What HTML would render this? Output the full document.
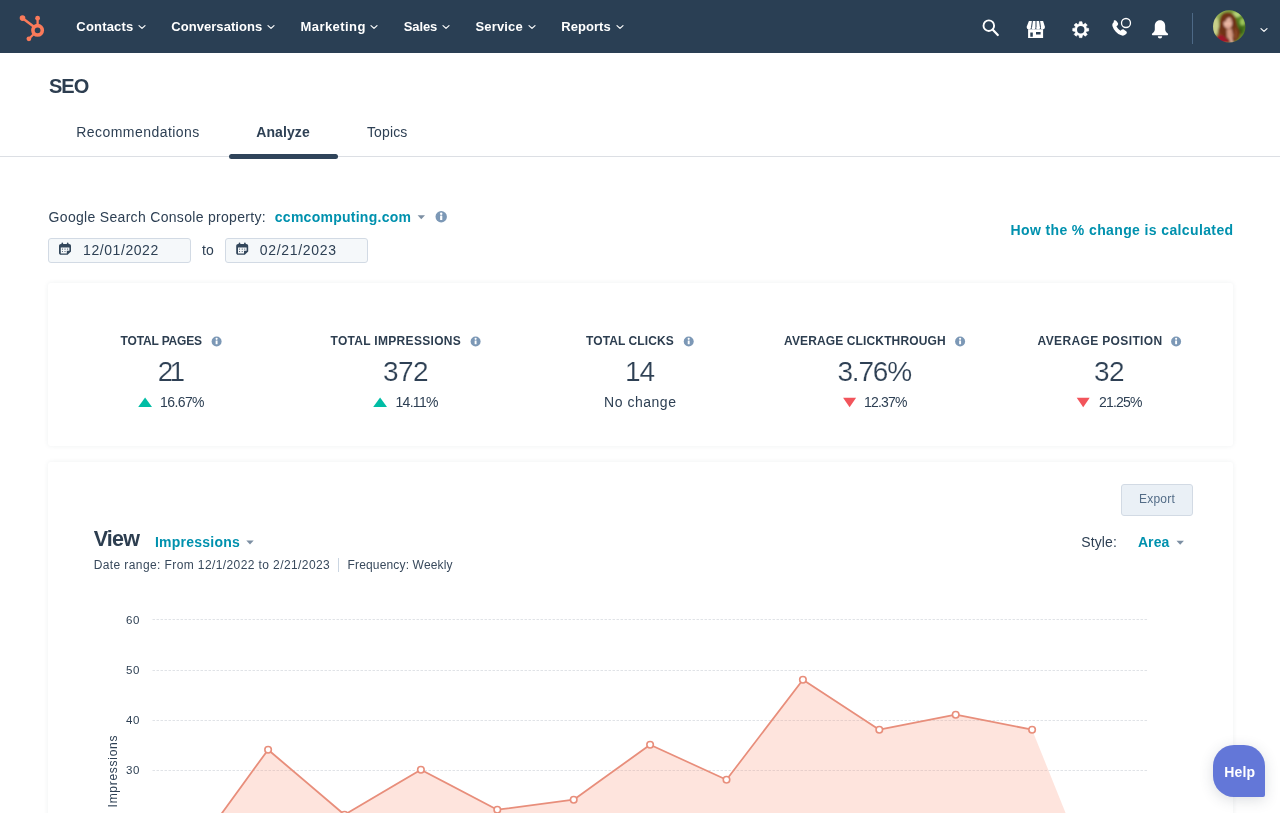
<!DOCTYPE html>
<html lang="en">
<head>
<meta charset="utf-8">
<title>SEO | Analyze</title>
<style>
*{box-sizing:border-box}
html,body{margin:0;padding:0}
body{width:1280px;height:813px;overflow:hidden;position:relative;background:#fff;color:#2e4054;font-family:"Liberation Sans",sans-serif;font-size:14px}
h1,h2,h3,p,ul,li,dl,dt,dd{margin:0;padding:0;font-weight:normal;list-style:none}
a{text-decoration:none;color:inherit}
.t{position:absolute;white-space:pre;margin:0;padding:0;display:block}
.abs{position:absolute}
svg{position:absolute;overflow:visible}
nav{position:absolute;left:0;top:0;width:1280px;height:53px;background:#2a3f54}
header,main{position:absolute;left:0;top:0;width:1280px}
nav,header,main,.help{will-change:transform}
.rule{position:absolute;left:0;top:156px;width:1280px;height:1px;background:#dcdfe4}
.tabline{position:absolute;left:228.5px;top:154px;width:109.5px;height:5px;border-radius:3px;background:#2f445a}
.card{position:absolute;left:48px;width:1185px;background:#fff;border-radius:3px;box-shadow:0 0 5px rgba(45,62,80,.075)}
.inp{position:absolute;top:238px;width:143px;height:25px;background:#f5f8fa;border:1px solid #d2dae4;border-radius:3px}
.btn{position:absolute;left:1121px;top:483.5px;width:72px;height:32px;background:#eaf0f6;border:1px solid #d2dae4;border-radius:3px}
.sep{position:absolute;left:338px;top:557.5px;width:1px;height:14.5px;background:#cbd6e2}
.big{-webkit-text-stroke:0.2px #fff}
.help{position:absolute;left:1213px;top:745px;width:52.3px;height:51.8px;background:#6377d8;border-radius:21px 21px 2px 21px;box-shadow:0 3px 14px rgba(45,62,80,.17)}
</style>
</head>
<body>

<nav>
<svg style="left:14px;top:10px" width="40" height="36" viewBox="14 10 40 36" role="img" aria-label="HubSpot">
<g fill="none" stroke="#fa7a5a" stroke-linecap="round">
<circle cx="37.6" cy="30.3" r="4.7" stroke-width="3.6"/>
<line x1="22.6" y1="18.3" x2="33.6" y2="26.6" stroke-width="2.5"/>
<line x1="37.6" y1="18.6" x2="37.6" y2="24.5" stroke-width="2.3"/>
<line x1="29.2" y1="38.5" x2="33.6" y2="34.2" stroke-width="2.2"/>
</g>
<g fill="#fa7a5a"><circle cx="22.5" cy="18.1" r="2.8"/><circle cx="37.6" cy="18.2" r="2.4"/><circle cx="28.9" cy="38.8" r="2.4"/></g>
</svg>
<ul>
<li><a class="t" style="left:76.3px;top:18.7px;font-size:13px;line-height:16px;font-weight:700;color:#fff;letter-spacing:0.19px;">Contacts</a><svg style="left:137.4px;top:22.3px" width="10" height="10" viewBox="0 0 10 10"><path d="M2 3.6 L5 6.4 L8 3.6" fill="none" stroke="#fff" stroke-width="1.2" stroke-linecap="round" stroke-linejoin="round"/></svg></li>
<li><a class="t" style="left:171.2px;top:18.7px;font-size:13px;line-height:16px;font-weight:700;color:#fff;letter-spacing:0.06px;">Conversations</a><svg style="left:266.15px;top:22.3px" width="10" height="10" viewBox="0 0 10 10"><path d="M2 3.6 L5 6.4 L8 3.6" fill="none" stroke="#fff" stroke-width="1.2" stroke-linecap="round" stroke-linejoin="round"/></svg></li>
<li><a class="t" style="left:300.5px;top:18.7px;font-size:13px;line-height:16px;font-weight:700;color:#fff;letter-spacing:0.44px;">Marketing</a><svg style="left:369.4px;top:22.3px" width="10" height="10" viewBox="0 0 10 10"><path d="M2 3.6 L5 6.4 L8 3.6" fill="none" stroke="#fff" stroke-width="1.2" stroke-linecap="round" stroke-linejoin="round"/></svg></li>
<li><a class="t" style="left:403.8px;top:18.7px;font-size:13px;line-height:16px;font-weight:700;color:#fff;letter-spacing:-0.14px;">Sales</a><svg style="left:441.25px;top:22.3px" width="10" height="10" viewBox="0 0 10 10"><path d="M2 3.6 L5 6.4 L8 3.6" fill="none" stroke="#fff" stroke-width="1.2" stroke-linecap="round" stroke-linejoin="round"/></svg></li>
<li><a class="t" style="left:475.5px;top:18.7px;font-size:13px;line-height:16px;font-weight:700;color:#fff;letter-spacing:0.16px;">Service</a><svg style="left:526.8px;top:22.3px" width="10" height="10" viewBox="0 0 10 10"><path d="M2 3.6 L5 6.4 L8 3.6" fill="none" stroke="#fff" stroke-width="1.2" stroke-linecap="round" stroke-linejoin="round"/></svg></li>
<li><a class="t" style="left:561.2px;top:18.7px;font-size:13px;line-height:16px;font-weight:700;color:#fff;letter-spacing:0.07px;">Reports</a><svg style="left:614.65px;top:22.3px" width="10" height="10" viewBox="0 0 10 10"><path d="M2 3.6 L5 6.4 L8 3.6" fill="none" stroke="#fff" stroke-width="1.2" stroke-linecap="round" stroke-linejoin="round"/></svg></li>
</ul>
<svg style="left:980px;top:17px" width="22" height="22" viewBox="980 17 22 22" role="img" aria-label="Search"><circle cx="988.8" cy="25.7" r="5.3" fill="none" stroke="#fff" stroke-width="1.9"/><line x1="992.8" y1="29.8" x2="997.8" y2="35" stroke="#fff" stroke-width="2.2" stroke-linecap="round"/></svg>
<svg style="left:1026px;top:20px" width="20" height="19" viewBox="1026 20 20 19" role="img" aria-label="Marketplace">
<path fill="#fff" d="M1028.9 21.1h14.2l1.9 5.9a2.3 2.4 0 0 1-4.6 0a2.3 2.4 0 0 1-4.6 0a2.3 2.4 0 0 1-4.6 0a2.3 2.4 0 0 1-4.6 0z"/>
<path fill="#fff" fill-rule="evenodd" d="M1028.1 29.2h15v8.8h-15z M1030.3 32.4v4.4h2.5v-4.4z M1036 32.1v2.3h4.6v-2.3z"/>
<g stroke="#2a3f54" stroke-width="1"><line x1="1032.4" y1="21" x2="1031.5" y2="27.6"/><line x1="1036" y1="21" x2="1036" y2="27.6"/><line x1="1039.6" y1="21" x2="1040.5" y2="27.6"/></g>
</svg>
<svg style="left:1070px;top:19px" width="22" height="22" viewBox="1070 19 22 22" role="img" aria-label="Settings"><path fill="#fff" stroke="#fff" stroke-width="0.7" stroke-linejoin="round" d="M1079.13 24.01 L1079.43 21.8 L1081.97 21.8 L1082.27 24.01 L1083.61 24.57 L1085.38 23.21 L1087.19 25.02 L1085.83 26.79 L1086.39 28.13 L1088.6 28.43 L1088.6 30.97 L1086.39 31.27 L1085.83 32.61 L1087.19 34.38 L1085.38 36.19 L1083.61 34.83 L1082.27 35.39 L1081.97 37.6 L1079.43 37.6 L1079.13 35.39 L1077.79 34.83 L1076.02 36.19 L1074.21 34.38 L1075.57 32.61 L1075.01 31.27 L1072.8 30.97 L1072.8 28.43 L1075.01 28.13 L1075.57 26.79 L1074.21 25.02 L1076.02 23.21 L1077.79 24.57Z"/><circle cx="1080.7" cy="29.7" r="3.7" fill="#2a3f54"/></svg>
<svg style="left:1110px;top:16px" width="24" height="22" viewBox="1110 16 24 22" role="img" aria-label="Calling">
<path fill="#fff" transform="translate(1119.6 28) scale(0.96 0.92) translate(-1120.6 -28.4)" d="M1114.6 20.3c.9-.6 2.1-.4 2.7 .5l1.5 2.3c.5 .8 .3 1.9-.4 2.5l-1.1 .9c.9 2 2.4 3.7 4.3 4.9l1-1c.7-.7 1.8-.8 2.6-.2l2.2 1.7c.9 .7 1 2 .2 2.8l-.9 .9c-1.1 1.1-2.8 1.4-4.3 .8c-4.4-1.8-7.8-5.5-9.2-10c-.5-1.6 0-3.3 1.3-4.3z"/>
<circle cx="1126" cy="23" r="4.5" fill="#2a3f54" stroke="#fff" stroke-width="1.3"/></svg>
<svg style="left:1150px;top:18px" width="20" height="22" viewBox="1150 18 20 22" role="img" aria-label="Notifications">
<path fill="#fff" d="M1160 20.2c-3.3 0-5.2 2.5-5.2 5.6v3.7c0 1.5-.9 2.9-2.3 3.7c-.4 .2-.6 .6-.6 1c0 .6 .5 1.1 1.1 1.1h14c.6 0 1.1-.5 1.1-1.1c0-.4-.2-.8-.6-1c-1.4-.8-2.3-2.2-2.3-3.7v-3.7c0-3.1-1.9-5.6-5.2-5.6z"/>
<path fill="#fff" d="M1157.8 36.3h4.4a2.2 2.2 0 0 1-4.4 0z"/></svg>
<span class="abs" style="left:1192px;top:13px;width:1px;height:31px;background:#4d6986"></span>
<svg style="left:1213px;top:9.7px" width="33" height="33" viewBox="0 0 33 33" role="img" aria-label="Account avatar">
<defs><clipPath id="av"><circle cx="16.2" cy="16.4" r="16.2"/></clipPath>
<filter id="avb" x="-20%" y="-20%" width="140%" height="140%"><feGaussianBlur stdDeviation="1"/></filter>
<radialGradient id="avg" cx="0.8" cy="0.5" r="0.8"><stop offset="0" stop-color="#3f6a16"/><stop offset="0.45" stop-color="#6b962f"/><stop offset="1" stop-color="#a8bb63"/></radialGradient></defs>
<g clip-path="url(#av)"><g filter="url(#avb)">
<rect x="-3" y="-3" width="39" height="39" fill="url(#avg)"/>
<ellipse cx="2.5" cy="16" rx="3.5" ry="9" fill="#c9d08a"/>
<ellipse cx="23" cy="4.5" rx="5" ry="2.6" fill="#b5d478"/>
<ellipse cx="29.5" cy="12" rx="2.5" ry="3.5" fill="#9cc65a"/>
<ellipse cx="27" cy="21" rx="2.5" ry="3" fill="#2f5a12"/>
<path d="M9 4.5c3-3 9-3 12 .5c2 2.5 2.5 6 3 9c.5 3 2.5 5.5 3 8.5c.5 3-1 6-3 8l-6 2.5l-11-2.5c-2-3-2.5-6-2-9c.5-3 1.5-5 1.5-8c0-3.5 .5-6.5 2.5-9z" fill="#6f3219"/>
<path d="M6 20c1 4 3 6 6 7l-3 4l-4-3z" fill="#8c4a28"/>
<path d="M22 17c2 3 3 7 2 11l-3 2z" fill="#8c4a28"/>
<path d="M13.5 19.5l5-1l1.5 6.5l-1 5.5l-5-3z" fill="#d49a84"/>
<ellipse cx="14.7" cy="12.4" rx="4.3" ry="6.3" transform="rotate(-10 14.7 12.4)" fill="#edb9a6"/>
<ellipse cx="13.2" cy="11.5" rx="0.7" ry="0.5" fill="#5a3325"/><ellipse cx="16.6" cy="11" rx="0.7" ry="0.5" fill="#5a3325"/>
<path d="M13.6 15.8q1.6 1 3.2 -.3" stroke="#b0604f" stroke-width="0.6" fill="none"/>
<path d="M10 9.5c1-3.5 5.5-5 8.5-3c-2 .5-4 1.5-5 3c-1 1.5-2 2.5-3.5 3z" fill="#6f3219"/>
<path d="M3 26.5c2.5-2 5.5-2 7.5-.5l7 7h-15z" fill="#a1122b"/>
<path d="M16 28l2.5-1l2 6h-3z" fill="#e0b09c"/>
</g></g></svg>
<svg style="left:1259px;top:24.7px" width="10" height="10" viewBox="0 0 10 10"><path d="M2 3.6 L5 6.4 L8 3.6" fill="none" stroke="#fff" stroke-width="1.2" stroke-linecap="round" stroke-linejoin="round"/></svg>
</nav>
<header>
<h1 class="t" style="left:48.9px;top:73.67px;font-size:20px;line-height:25px;font-weight:700;color:#2d3e50;letter-spacing:-0.89px;">SEO</h1>
<div class="rule"></div>
<ul>
<li><a class="t" style="left:76.2px;top:122.75px;font-size:14px;line-height:18px;letter-spacing:0.46px;">Recommendations</a></li>
<li><a class="t" style="left:256.2px;top:122.75px;font-size:14px;line-height:18px;font-weight:700;letter-spacing:0.11px;">Analyze</a></li>
<li><a class="t" style="left:367px;top:122.75px;font-size:14px;line-height:18px;letter-spacing:0.12px;">Topics</a></li>
</ul>
<div class="tabline"></div>
</header>
<main>
<label class="t" style="left:48.6px;top:208.35px;font-size:14px;line-height:18px;letter-spacing:0.31px;">Google Search Console property:</label>
<a class="t" style="left:274.8px;top:208.35px;font-size:14px;line-height:18px;font-weight:700;color:#0091ae;letter-spacing:0.26px;">ccmcomputing.com</a>
<svg style="left:417px;top:214px" width="9" height="6" viewBox="0 0 9 6" aria-hidden="true"><g transform="translate(0.3 0.8)"><path d="M0.3 0.4 h7.4 l-3.7 4.1z" fill="#7c8fa3"/></g></svg>
<svg style="left:435px;top:211px" width="12" height="12" viewBox="0 0 12 12" role="img" aria-label="info"><g transform="translate(0.5 0.1) scale(0.95 0.95)"><g transform="translate(6 6)"><circle r="6" fill="#7c98b6"/><rect x="-1.15" y="-1.3" width="2.3" height="4.7" rx="0.4" fill="#fff"/><circle cy="-3.2" r="1.3" fill="#fff"/></g></g></svg>
<div class="inp" role="textbox" aria-label="Start date" style="left:48px"><svg style="left:10px;top:3px" width="12" height="13" viewBox="0 0 12 13" role="img" aria-label="calendar"><g transform="translate(0 0.5) scale(1 0.984)"><path fill="#33475b" d="M2.5 0.6c0-0.8 1.6-0.8 1.6 0v1h3.8v-1c0-0.8 1.6-0.8 1.6 0v1h0.6c1 0 1.9 0.8 1.9 1.9v5.6l-3.4 3.4h-6.7c-1 0-1.9-0.8-1.9-1.9v-7.1c0-1 0.8-1.9 1.9-1.9h0.6z"/><path fill="#f5f8fa" d="M1.8 5.2h8.6v3.3h-2.6v2.6h-6z"/><g fill="#33475b"><circle cx="3.4" cy="6.7" r="0.55"/><circle cx="6" cy="6.7" r="0.55"/><circle cx="8.6" cy="6.7" r="0.55"/><circle cx="3.4" cy="9.2" r="0.55"/><circle cx="6" cy="9.2" r="0.55"/></g></g></svg><span class="t" style="left:34.1px;top:2.35px;font-size:14px;line-height:18px;letter-spacing:0.56px;">12/01/2022</span></div>
<span class="t" style="left:201.9px;top:241.35px;font-size:14px;line-height:18px;letter-spacing:0.11px;">to</span>
<div class="inp" role="textbox" aria-label="End date" style="left:225px"><svg style="left:10px;top:3px" width="13" height="13" viewBox="0 0 13 13" role="img" aria-label="calendar"><g transform="translate(0.2 0.5) scale(1 0.984)"><path fill="#33475b" d="M2.5 0.6c0-0.8 1.6-0.8 1.6 0v1h3.8v-1c0-0.8 1.6-0.8 1.6 0v1h0.6c1 0 1.9 0.8 1.9 1.9v5.6l-3.4 3.4h-6.7c-1 0-1.9-0.8-1.9-1.9v-7.1c0-1 0.8-1.9 1.9-1.9h0.6z"/><path fill="#f5f8fa" d="M1.8 5.2h8.6v3.3h-2.6v2.6h-6z"/><g fill="#33475b"><circle cx="3.4" cy="6.7" r="0.55"/><circle cx="6" cy="6.7" r="0.55"/><circle cx="8.6" cy="6.7" r="0.55"/><circle cx="3.4" cy="9.2" r="0.55"/><circle cx="6" cy="9.2" r="0.55"/></g></g></svg><span class="t" style="left:33.8px;top:2.35px;font-size:14px;line-height:18px;letter-spacing:0.69px;">02/21/2023</span></div>
<a class="t" style="left:1010.5px;top:221.35px;font-size:14px;line-height:18px;font-weight:700;color:#0091ae;letter-spacing:0.38px;">How the % change is calculated</a>
<section class="card" style="top:282.5px;height:163.5px"></section>
<dl>
<dt><span class="t" style="left:120.6px;top:333.64px;font-size:12px;line-height:15px;font-weight:700;color:#2d3e50;letter-spacing:-0.16px;">TOTAL PAGES</span><svg style="left:211px;top:336px" width="11" height="11" viewBox="0 0 11 11" role="img" aria-label="info"><g transform="translate(0.6 0.5) scale(0.8333 0.8333)"><g transform="translate(6 6)"><circle r="6" fill="#7c98b6"/><rect x="-1.15" y="-1.3" width="2.3" height="4.7" rx="0.4" fill="#fff"/><circle cy="-3.2" r="1.3" fill="#fff"/></g></g></svg></dt>
<dd><span class="t big" style="left:157.7px;top:353.8px;font-size:28px;line-height:35px;letter-spacing:-3.87px;">21</span>
<svg style="left:138px;top:397px" width="14" height="10" viewBox="0 0 14 10" aria-hidden="true"><g transform="translate(0.2 0.6)"><path d="M6.9 0 L13.8 9.4 H0Z" fill="#00bda5"/></g></svg>
<span class="t" style="left:160px;top:393.45px;font-size:14px;line-height:18px;letter-spacing:-0.59px;">16.67%</span></dd>
<dt><span class="t" style="left:330.5px;top:333.64px;font-size:12px;line-height:15px;font-weight:700;color:#2d3e50;letter-spacing:0.31px;">TOTAL IMPRESSIONS</span><svg style="left:470px;top:336px" width="11" height="11" viewBox="0 0 11 11" role="img" aria-label="info"><g transform="translate(0.6 0.5) scale(0.8333 0.8333)"><g transform="translate(6 6)"><circle r="6" fill="#7c98b6"/><rect x="-1.15" y="-1.3" width="2.3" height="4.7" rx="0.4" fill="#fff"/><circle cy="-3.2" r="1.3" fill="#fff"/></g></g></svg></dt>
<dd><span class="t big" style="left:383px;top:353.8px;font-size:28px;line-height:35px;letter-spacing:-0.57px;">372</span>
<svg style="left:373px;top:397px" width="14" height="10" viewBox="0 0 14 10" aria-hidden="true"><g transform="translate(0.2 0.6)"><path d="M6.9 0 L13.8 9.4 H0Z" fill="#00bda5"/></g></svg>
<span class="t" style="left:395.5px;top:393.45px;font-size:14px;line-height:18px;letter-spacing:-0.7px;">14.11%</span></dd>
<dt><span class="t" style="left:586px;top:333.64px;font-size:12px;line-height:15px;font-weight:700;color:#2d3e50;letter-spacing:0.1px;">TOTAL CLICKS</span><svg style="left:683px;top:336px" width="11" height="11" viewBox="0 0 11 11" role="img" aria-label="info"><g transform="translate(0.7 0.5) scale(0.8333 0.8333)"><g transform="translate(6 6)"><circle r="6" fill="#7c98b6"/><rect x="-1.15" y="-1.3" width="2.3" height="4.7" rx="0.4" fill="#fff"/><circle cy="-3.2" r="1.3" fill="#fff"/></g></g></svg></dt>
<dd><span class="t big" style="left:625px;top:353.8px;font-size:28px;line-height:35px;letter-spacing:-0.97px;">14</span>
<span class="t" style="left:604px;top:393.45px;font-size:14px;line-height:18px;letter-spacing:0.53px;">No change</span></dd>
<dt><span class="t" style="left:784px;top:333.64px;font-size:12px;line-height:15px;font-weight:700;color:#2d3e50;letter-spacing:0.13px;">AVERAGE CLICKTHROUGH</span><svg style="left:955px;top:336px" width="11" height="11" viewBox="0 0 11 11" role="img" aria-label="info"><g transform="translate(0.1 0.5) scale(0.8333 0.8333)"><g transform="translate(6 6)"><circle r="6" fill="#7c98b6"/><rect x="-1.15" y="-1.3" width="2.3" height="4.7" rx="0.4" fill="#fff"/><circle cy="-3.2" r="1.3" fill="#fff"/></g></g></svg></dt>
<dd><span class="t big" style="left:837.4px;top:353.8px;font-size:28px;line-height:35px;letter-spacing:-1.17px;">3.76%</span>
<svg style="left:843px;top:397px" width="14" height="11" viewBox="0 0 14 11" aria-hidden="true"><g transform="translate(0.1 0.8)"><path d="M6.5 9.4 L13 0 H0Z" fill="#f2545b"/></g></svg>
<span class="t" style="left:864px;top:393.45px;font-size:14px;line-height:18px;letter-spacing:-0.81px;">12.37%</span></dd>
<dt><span class="t" style="left:1037.5px;top:333.64px;font-size:12px;line-height:15px;font-weight:700;color:#2d3e50;letter-spacing:0.37px;">AVERAGE POSITION</span><svg style="left:1171px;top:336px" width="11" height="11" viewBox="0 0 11 11" role="img" aria-label="info"><g transform="translate(0.1 0.5) scale(0.8333 0.8333)"><g transform="translate(6 6)"><circle r="6" fill="#7c98b6"/><rect x="-1.15" y="-1.3" width="2.3" height="4.7" rx="0.4" fill="#fff"/><circle cy="-3.2" r="1.3" fill="#fff"/></g></g></svg></dt>
<dd><span class="t big" style="left:1094px;top:353.8px;font-size:28px;line-height:35px;letter-spacing:-0.57px;">32</span>
<svg style="left:1076px;top:397px" width="14" height="11" viewBox="0 0 14 11" aria-hidden="true"><g transform="translate(0.7 0.8)"><path d="M6.5 9.4 L13 0 H0Z" fill="#f2545b"/></g></svg>
<span class="t" style="left:1099px;top:393.45px;font-size:14px;line-height:18px;letter-spacing:-0.81px;">21.25%</span></dd>
</dl>
<section class="card" style="top:462px;height:400px"></section>
<div class="btn" role="button"><span class="t" style="left:17px;top:7.44px;font-size:12px;line-height:15px;color:#536c87;letter-spacing:0.23px;">Export</span></div>
<h2 class="t" style="left:93.7px;top:525.65px;font-size:21.5px;line-height:27px;font-weight:700;color:#2d3e50;letter-spacing:-0.79px;">View</h2>
<a class="t" style="left:155px;top:533.35px;font-size:14px;line-height:18px;font-weight:700;color:#0091ae;letter-spacing:0.23px;">Impressions</a>
<svg style="left:246px;top:540px" width="8" height="5" viewBox="0 0 8 5" aria-hidden="true"><g transform="translate(0 0)"><path d="M0.3 0.4 h7.4 l-3.7 4.1z" fill="#7c8fa3"/></g></svg>
<label class="t" style="left:1081.2px;top:533.05px;font-size:14px;line-height:18px;letter-spacing:0.14px;">Style:</label>
<a class="t" style="left:1137.9px;top:533.05px;font-size:14px;line-height:18px;font-weight:700;color:#0091ae;letter-spacing:0.09px;">Area</a>
<svg style="left:1176px;top:540px" width="9" height="6" viewBox="0 0 9 6" aria-hidden="true"><g transform="translate(0.2 0.3)"><path d="M0.3 0.4 h7.4 l-3.7 4.1z" fill="#7c8fa3"/></g></svg>
<p class="t" style="left:93.7px;top:558.04px;font-size:12px;line-height:15px;color:#38495c;letter-spacing:0.4px;">Date range: From 12/1/2022 to 2/21/2023</p>
<div class="sep"></div>
<p class="t" style="left:347.5px;top:558.04px;font-size:12px;line-height:15px;color:#38495c;letter-spacing:0.16px;">Frequency: Weekly</p>
<svg style="left:0;top:590px" width="1280" height="223" viewBox="0 590 1280 223" role="img" aria-label="Impressions area chart">
<line x1="152.5" x2="1147.5" y1="619.5" y2="619.5" stroke="#e0e3e7" stroke-width="1" stroke-dasharray="2.5 1.5"/>
<line x1="152.5" x2="1147.5" y1="670.5" y2="670.5" stroke="#e0e3e7" stroke-width="1" stroke-dasharray="2.5 1.5"/>
<line x1="152.5" x2="1147.5" y1="720.5" y2="720.5" stroke="#e0e3e7" stroke-width="1" stroke-dasharray="2.5 1.5"/>
<line x1="152.5" x2="1147.5" y1="770.5" y2="770.5" stroke="#e0e3e7" stroke-width="1" stroke-dasharray="2.5 1.5"/>
<path d="M191.7 854.7 L268.1 749.7 L344.5 814.7 L420.9 769.7 L497.3 809.7 L573.7 799.7 L650.1 744.7 L726.5 779.7 L802.9 679.7 L879.3 729.7 L955.7 714.7 L1032.1 729.7 L1108.5 919.7 L1108.5 930 L191.7 930Z" fill="#fa967d" fill-opacity="0.26"/>
<path d="M191.7 854.7 L268.1 749.7 L344.5 814.7 L420.9 769.7 L497.3 809.7 L573.7 799.7 L650.1 744.7 L726.5 779.7 L802.9 679.7 L879.3 729.7 L955.7 714.7 L1032.1 729.7" fill="none" stroke="#e88e7b" stroke-width="1.8" stroke-linejoin="round"/>
<circle cx="191.7" cy="854.7" r="3.25" fill="#fff" stroke="#e88e7b" stroke-width="1.6"/>
<circle cx="268.1" cy="749.7" r="3.25" fill="#fff" stroke="#e88e7b" stroke-width="1.6"/>
<circle cx="344.5" cy="814.7" r="3.25" fill="#fff" stroke="#e88e7b" stroke-width="1.6"/>
<circle cx="420.9" cy="769.7" r="3.25" fill="#fff" stroke="#e88e7b" stroke-width="1.6"/>
<circle cx="497.3" cy="809.7" r="3.25" fill="#fff" stroke="#e88e7b" stroke-width="1.6"/>
<circle cx="573.7" cy="799.7" r="3.25" fill="#fff" stroke="#e88e7b" stroke-width="1.6"/>
<circle cx="650.1" cy="744.7" r="3.25" fill="#fff" stroke="#e88e7b" stroke-width="1.6"/>
<circle cx="726.5" cy="779.7" r="3.25" fill="#fff" stroke="#e88e7b" stroke-width="1.6"/>
<circle cx="802.9" cy="679.7" r="3.25" fill="#fff" stroke="#e88e7b" stroke-width="1.6"/>
<circle cx="879.3" cy="729.7" r="3.25" fill="#fff" stroke="#e88e7b" stroke-width="1.6"/>
<circle cx="955.7" cy="714.7" r="3.25" fill="#fff" stroke="#e88e7b" stroke-width="1.6"/>
<circle cx="1032.1" cy="729.7" r="3.25" fill="#fff" stroke="#e88e7b" stroke-width="1.6"/>
</svg>
<span class="t" style="left:126px;top:613.12px;font-size:11.5px;line-height:14px;letter-spacing:0.6px;">60</span>
<span class="t" style="left:126px;top:663.12px;font-size:11.5px;line-height:14px;letter-spacing:0.6px;">50</span>
<span class="t" style="left:126px;top:713.12px;font-size:11.5px;line-height:14px;letter-spacing:0.6px;">40</span>
<span class="t" style="left:126px;top:763.12px;font-size:11.5px;line-height:14px;letter-spacing:0.6px;">30</span>
<div class="abs" style="left:118.3px;top:771.2px;width:0;height:0;transform:rotate(-90deg)"><span class="t" style="left:-36.4px;top:-11.66px;font-size:12px;line-height:15px;letter-spacing:0.71px;">Impressions</span></div>
</main>
<div class="help" role="button"><span class="t" style="left:11.2px;top:17.85px;font-size:14px;line-height:18px;font-weight:700;color:#fff;letter-spacing:0.17px;">Help</span></div>
</body>
</html>
